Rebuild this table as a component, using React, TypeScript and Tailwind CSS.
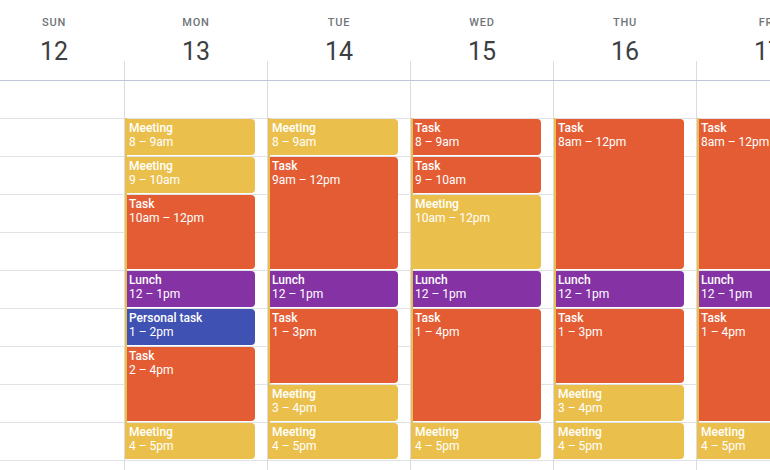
import React from "react";

type Ev = { t: string; time: string; s: number; n: number; c: "y" | "o" | "p" | "b" };

const colorCls: Record<string, string> = {
  y: "bg-[#ebbf4c]",
  o: "bg-[#e35c33]",
  p: "bg-[#8532a5]",
  b: "bg-[#3f52b4]",
};
const startCls: Record<number, string> = {
  1: "row-start-1",
  2: "row-start-2",
  3: "row-start-3",
  4: "row-start-4",
  5: "row-start-5",
  6: "row-start-6",
  7: "row-start-7",
  8: "row-start-8",
  9: "row-start-9",
  10: "row-start-10",
};
const spanCls: Record<number, string> = {
  1: "row-span-1",
  2: "row-span-2",
  3: "row-span-3",
  4: "row-span-4",
};

const days: { d: string; n: number; ev: Ev[] }[] = [
  { d: "SUN", n: 12, ev: [] },
  {
    d: "MON",
    n: 13,
    ev: [
      { t: "Meeting", time: "8 – 9am", s: 1, n: 1, c: "y" },
      { t: "Meeting", time: "9 – 10am", s: 2, n: 1, c: "y" },
      { t: "Task", time: "10am – 12pm", s: 3, n: 2, c: "o" },
      { t: "Lunch", time: "12 – 1pm", s: 5, n: 1, c: "p" },
      { t: "Personal task", time: "1 – 2pm", s: 6, n: 1, c: "b" },
      { t: "Task", time: "2 – 4pm", s: 7, n: 2, c: "o" },
      { t: "Meeting", time: "4 – 5pm", s: 9, n: 1, c: "y" },
    ],
  },
  {
    d: "TUE",
    n: 14,
    ev: [
      { t: "Meeting", time: "8 – 9am", s: 1, n: 1, c: "y" },
      { t: "Task", time: "9am – 12pm", s: 2, n: 3, c: "o" },
      { t: "Lunch", time: "12 – 1pm", s: 5, n: 1, c: "p" },
      { t: "Task", time: "1 – 3pm", s: 6, n: 2, c: "o" },
      { t: "Meeting", time: "3 – 4pm", s: 8, n: 1, c: "y" },
      { t: "Meeting", time: "4 – 5pm", s: 9, n: 1, c: "y" },
    ],
  },
  {
    d: "WED",
    n: 15,
    ev: [
      { t: "Task", time: "8 – 9am", s: 1, n: 1, c: "o" },
      { t: "Task", time: "9 – 10am", s: 2, n: 1, c: "o" },
      { t: "Meeting", time: "10am – 12pm", s: 3, n: 2, c: "y" },
      { t: "Lunch", time: "12 – 1pm", s: 5, n: 1, c: "p" },
      { t: "Task", time: "1 – 4pm", s: 6, n: 3, c: "o" },
      { t: "Meeting", time: "4 – 5pm", s: 9, n: 1, c: "y" },
    ],
  },
  {
    d: "THU",
    n: 16,
    ev: [
      { t: "Task", time: "8am – 12pm", s: 1, n: 4, c: "o" },
      { t: "Lunch", time: "12 – 1pm", s: 5, n: 1, c: "p" },
      { t: "Task", time: "1 – 3pm", s: 6, n: 2, c: "o" },
      { t: "Meeting", time: "3 – 4pm", s: 8, n: 1, c: "y" },
      { t: "Meeting", time: "4 – 5pm", s: 9, n: 1, c: "y" },
    ],
  },
  {
    d: "FRI",
    n: 17,
    ev: [
      { t: "Task", time: "8am – 12pm", s: 1, n: 4, c: "o" },
      { t: "Lunch", time: "12 – 1pm", s: 5, n: 1, c: "p" },
      { t: "Task", time: "1 – 4pm", s: 6, n: 3, c: "o" },
      { t: "Meeting", time: "4 – 5pm", s: 9, n: 1, c: "y" },
    ],
  },
];

const hours = [1, 2, 3, 4, 5, 6, 7, 8, 9, 10];

function DayBody({ ev, first }: { ev: Ev[]; first: boolean }) {
  return (
    <div className="flex flex-col">
      <div className="h-[37px]" />
      <div className="grid grid-cols-1 grid-rows-[repeat(10,38px)]">
        {hours.map((h) => (
          <div
            key={h}
            className={`col-start-1 ${startCls[h]} row-span-1 border-t border-[#e1e2e5]`}
          />
        ))}
        {!first && (
          <div className="col-start-1 row-start-1 row-span-9 w-[2px] h-[341px] bg-[#ebbf4c]" />
        )}
        {ev.map((e, i) => (
          <div
            key={i}
            className={`col-start-1 ${startCls[e.s]} ${spanCls[e.n]} ${colorCls[e.c]} ml-[2px] w-[128px] mt-px mb-px rounded-r-[4px] pl-[2px] pt-[2px] text-white text-[12px] leading-[14px] overflow-hidden`}
          >
            <div className="font-medium whitespace-nowrap">{e.t}</div>
            <div className="whitespace-nowrap">{e.time}</div>
          </div>
        ))}
      </div>
    </div>
  );
}

export default function App() {
  return (
    <div
      className="w-[770px] h-[470px] overflow-hidden bg-white flex flex-col"
      style={{ fontFamily: "Roboto, 'Noto Sans', Arial, sans-serif" }}
    >
      <div className="flex h-[80px] shrink-0">
        {days.map((d, i) => (
          <div
            key={d.d}
            className={`${i === 0 ? "w-[124px]" : "w-[143px]"} shrink-0 flex flex-col h-[80px]`}
          >
            <div className={`flex flex-col items-center shrink-0 ${i === 0 ? "pr-[16px]" : "pl-px"}`}>
              <div className="mt-[15px] text-[11px] leading-[16px] font-medium tracking-[0.8px] text-[#70757a]">
                {d.d}
              </div>
              <div className="mt-[12px] text-[25px] leading-[18px] text-[#3c4043]">{d.n}</div>
            </div>
            <div className={`mt-auto shrink-0 h-[19px] ${i === 0 ? "" : "border-l border-[#dadce0]"}`} />
          </div>
        ))}
      </div>
      <div className="h-px w-full bg-[#c0c4d8] shrink-0" />
      <div className="flex flex-1">
        {days.map((d, i) => (
          <div
            key={d.d}
            className={`${i === 0 ? "w-[124px]" : "w-[143px] border-l border-[#dadce0]"} shrink-0`}
          >
            <DayBody ev={d.ev} first={i === 0} />
          </div>
        ))}
      </div>
    </div>
  );
}
